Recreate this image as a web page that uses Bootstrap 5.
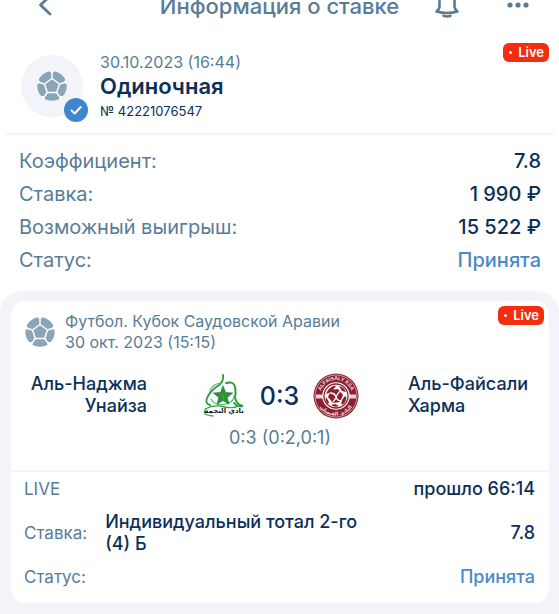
<!DOCTYPE html>
<html lang="ru">
<head>
<meta charset="utf-8">
<meta name="viewport" content="width=device-width, initial-scale=1">
<title>Информация о ставке</title>
<link href="https://cdn.jsdelivr.net/npm/bootstrap@5.3.0/dist/css/bootstrap.min.css" rel="stylesheet">
<style>
:root { --slate: #587c97; --navy: #0c2f57; --sky: #4b8ac6; --haze: #f3f3fa; }
body { font-family: Inter, "Noto Sans", sans-serif; color: var(--navy); background: #fff; overflow-x: hidden; }
.slate { color: var(--slate); }
.sky { color: var(--sky); }
.app-header { height: 40px; margin-top: -14px; padding: 0 28px; color: var(--slate); }
.app-header h1 { font-size: 22px; line-height: 28px; font-weight: 500; }
.header-side { flex: 1 1 0; }
.icon-btn { border: 0; background: none; padding: 0; color: inherit; display: flex; }
.summary { margin: 0 5px; padding: 17px 5px 11px 16px; border-bottom: 2px solid #f5f5f7; }
.bet-avatar { width: 62px; height: 62px; background: var(--haze); position: relative; flex: none; margin-top: 12px; }
.check-badge { position: absolute; right: -5px; bottom: -5px; width: 24px; height: 24px; }
.summary-text { margin-left: 17px; padding-top: 9px; }
.t13 { font-size: 13px; line-height: 22px; }
.t16 { font-size: 16px; line-height: 21px; }
.t17 { font-size: 17px; line-height: 22px; }
.t18 { font-size: 18px; line-height: 22px; }
.t22 { font-size: 22px; line-height: 27px; font-weight: 600; margin: 0; }
.live-tag { background: #f42d0e; color: #fff; font-size: 13px; line-height: 19px; font-weight: 600; border-radius: 6px; padding: 0 5px 0 6px; gap: 6px; }
.live-tag::before { content: ""; width: 3px; height: 3px; background: #fff; border-radius: 50%; }
.totals { padding: 10px 18px 14px 19px; font-size: 20px; line-height: 33px; }
.event-wrap { background: var(--haze); border-radius: 22px 22px 0 0; padding: 10px 10px 12px 11px; }
.event-card { border: 0; border-radius: 14px; color: inherit; }
.event-head { padding: 5px 5px 0 14px; }
.event-names { margin-left: 10px; padding-top: 5px; }
.event-ball { margin-top: 11px; flex: none; }
.match { display: grid; grid-template-columns: 136px 1fr 141px; padding-top: 20px; }
.crests { gap: 14px; padding-left: 6px; }
.score { font-size: 25px; line-height: 32px; font-weight: 500; }
.half-score { padding-bottom: 21px; border-bottom: 2px solid #f4f5f8; margin-top: 8px; }
.details { padding: 6px 14px 15px 13px; }
.pick-row { margin: 11px 0; }
.pick { margin-left: 18px; width: 270px; }
</style>
</head>
<body>
<svg width="0" height="0" class="d-none" aria-hidden="true">
  <symbol id="ball" viewBox="0 0 30 30">
    <circle cx="15" cy="15" r="14.7" fill="#8aa5ba"/>
    <g fill="none" stroke="#fff" stroke-width="1.5" stroke-linejoin="round">
      <path d="M15 7.500 22.500 13 19.700 21.500H10.300L7.500 13Z"/>
      <path d="M15 7.500V0M22.500 13 29.600 10.700M19.700 21.500 24 27.600M10.300 21.500 6 27.600M7.500 13 .4 10.700"/>
    </g>
    <path d="m15 3 2.200-3h-4.400ZM26.400 11.700 29 8l1 5ZM22 25l4 0-3 4ZM8 25l-4 0 3 4ZM3.600 11.700 1 8 0 13Z" fill="#fff"/>
  </symbol>
</svg>

<header class="app-header d-flex align-items-center">
  <div class="header-side d-flex">
    <button class="icon-btn" type="button" aria-label="Назад">
      <svg width="30" height="30" viewBox="0 0 30 30" fill="none" stroke="currentColor" stroke-width="2.800" stroke-linecap="round" stroke-linejoin="round"><path d="M22 5 12.500 14 22 23"/></svg>
    </button>
  </div>
  <h1 class="m-0 text-nowrap">Информация о ставке</h1>
  <div class="header-side d-flex justify-content-end align-items-center gap-5">
    <button class="icon-btn" type="button" aria-label="Уведомления">
      <svg width="26" height="32" viewBox="0 0 26 32" fill="none" stroke="currentColor" stroke-width="2.600" stroke-linecap="round" stroke-linejoin="round"><path d="M6.500 17V9a7.500 7.500 0 0 1 15 0v8q.3 2.500 3 4.500Q14 24.500 3.500 21.500 6.200 19.500 6.500 17Z"/><path d="M10.500 25.800q3.500 1.300 7 0"/></svg>
    </button>
    <button class="icon-btn" type="button" aria-label="Ещё">
      <svg width="24" height="8" viewBox="0 0 24 8" fill="currentColor"><circle cx="3" cy="3" r="2.600"/><circle cx="11" cy="3" r="2.600"/><circle cx="19" cy="3" r="2.600"/></svg>
    </button>
  </div>
</header>

<main>
  <section class="summary d-flex align-items-start">
    <div class="bet-avatar rounded-circle d-flex align-items-center justify-content-center">
      <svg width="30" height="30"><use href="#ball"/></svg>
      <svg class="check-badge" viewBox="0 0 24 24"><circle cx="12" cy="12" r="12" fill="#3f86d0"/><path d="M7.500 12.400 10.700 15.500 16.700 9" fill="none" stroke="#fff" stroke-width="2" stroke-linecap="round" stroke-linejoin="round"/></svg>
    </div>
    <div class="summary-text">
      <div class="t16 slate">30.10.2023 (16:44)</div>
      <h2 class="t22">Одиночная</h2>
      <div class="t13">№ 42221076547</div>
    </div>
    <span class="live-tag d-flex align-items-center ms-auto">Live</span>
  </section>

  <section class="totals">
    <div class="d-flex justify-content-between"><span class="slate">Коэффициент:</span><span class="fw-medium">7.8</span></div>
    <div class="d-flex justify-content-between"><span class="slate">Ставка:</span><span class="fw-medium">1 990 ₽</span></div>
    <div class="d-flex justify-content-between"><span class="slate">Возможный выигрыш:</span><span class="fw-medium">15 522 ₽</span></div>
    <div class="d-flex justify-content-between"><span class="slate">Статус:</span><span class="fw-medium sky">Принята</span></div>
  </section>

  <section class="event-wrap">
    <article class="event-card card">
      <div class="event-head d-flex align-items-start">
        <svg class="event-ball" width="30" height="30"><use href="#ball"/></svg>
        <div class="event-names t16 slate">
          <div>Футбол. Кубок Саудовской Аравии</div>
          <div>30 окт. 2023 (15:15)</div>
        </div>
        <span class="live-tag d-flex align-items-center ms-auto">Live</span>
      </div>

      <div class="match">
        <div class="t18 fw-medium text-end">Аль-Наджма<br>Унайза</div>
        <div class="crests d-flex align-items-center justify-content-center">
          <svg width="44" height="44" viewBox="0 0 44 44" fill="none" stroke-linecap="round">
            <path d="M21 1q1 6-4 10-9 6-12 13-2 6 3 7" stroke="#259b38" stroke-width="1.800"/>
            <path d="M24 9q8-2 9 4 1 4 0 11 2 7 8 8-6 1-9-3" stroke="#259b38" stroke-width="1.900"/>
            <path d="M19 9q-9 1-11 8m1 8q5 8 15 5 9-3 8-9" stroke="#57b465" stroke-width="1.100"/>
            <path d="M3 35q9-5 20-2 10 2 14-2M3 36q-3 5 8 6" stroke="#39a64b" stroke-width="1.300"/>
            <path d="m21 12 2.700 6.500 7 .5-5.400 4.500 1.700 6.800-6-3.700-6 3.700 1.800-6.800-5.400-4.500 7-.5Z" fill="#27933a" stroke="#1b6f2a" stroke-width=".6"/>
            <path d="m20 20 2 3-1 3" stroke="#b6794b" stroke-width=".8"/>
            <text x="22" y="39" fill="#171717" font-family="DejaVu Sans" font-size="7" font-weight="700" text-anchor="middle">نادي النجمة</text>
          </svg>
          <span class="score">0:3</span>
          <svg width="46" height="46" viewBox="0 0 46 46">
            <defs><path id="arc-top" d="M7 23a16 16 0 0 1 32 0"/><path id="arc-bottom" d="M3.500 23a19.500 19.500 0 0 0 39 0"/></defs>
            <circle cx="23" cy="23" r="22.500" fill="#8b1f30"/>
            <circle cx="23" cy="23" r="21" fill="none" stroke="#dcb9be" stroke-width=".8"/>
            <path d="M3 21.500h8v4H3zM35 21.500h8v4h-8z" fill="#e8d2d5"/>
            <circle cx="23" cy="23" r="13.800" fill="#fff"/>
            <circle cx="23" cy="23" r="12" fill="#fff" stroke="#8b1f30" stroke-width="1.300"/>
            <g fill="#8b1f30"><path d="m18 17 7-1 5 6-3 7-7 1-5-6Z"/><path d="M16 16q4-4 7-3l-3 4-4 3-3 1q1-3 3-5ZM26 13q5 1 7 6l-4-1ZM13 24l3 5-1 2q-3-3-2-7ZM33 23q1 6-4 9l-1-3 3-5ZM18 32l4-1 4 2q-4 2-8-1Z"/></g>
            <path d="M17 20q5 0 6 4t6 4M27 18q-3 3-4 7l-3 4" fill="none" stroke="#fff" stroke-width="1.300"/>
            <g fill="#f4e2e4" font-family="Liberation Sans" font-size="5" font-weight="700" text-anchor="middle">
              <text><textPath href="#arc-top" startOffset="50%">ALFAISALY KSA</textPath></text>
              <text font-family="DejaVu Sans"><textPath href="#arc-bottom" startOffset="50%">النادي الفيصلي</textPath></text>
            </g>
          </svg>
        </div>
        <div class="t18 fw-medium">Аль-Файсали<br>Харма</div>
      </div>
      <div class="half-score t18 slate text-center">0:3 (0:2,0:1)</div>

      <div class="details t17">
        <div class="d-flex justify-content-between align-items-center"><span class="slate">LIVE</span><span class="t18 fw-medium">прошло 66:14</span></div>
        <div class="pick-row d-flex align-items-center"><span class="slate">Ставка:</span><span class="pick t18 fw-medium">Индивидуальный тотал 2-го (4) Б</span><span class="t18 fw-medium ms-auto">7.8</span></div>
        <div class="d-flex justify-content-between align-items-center"><span class="slate">Статус:</span><span class="t18 fw-medium sky">Принята</span></div>
      </div>
    </article>
  </section>
</main>
<script src="https://cdn.jsdelivr.net/npm/bootstrap@5.3.0/dist/js/bootstrap.bundle.min.js"></script>
</body>
</html>
